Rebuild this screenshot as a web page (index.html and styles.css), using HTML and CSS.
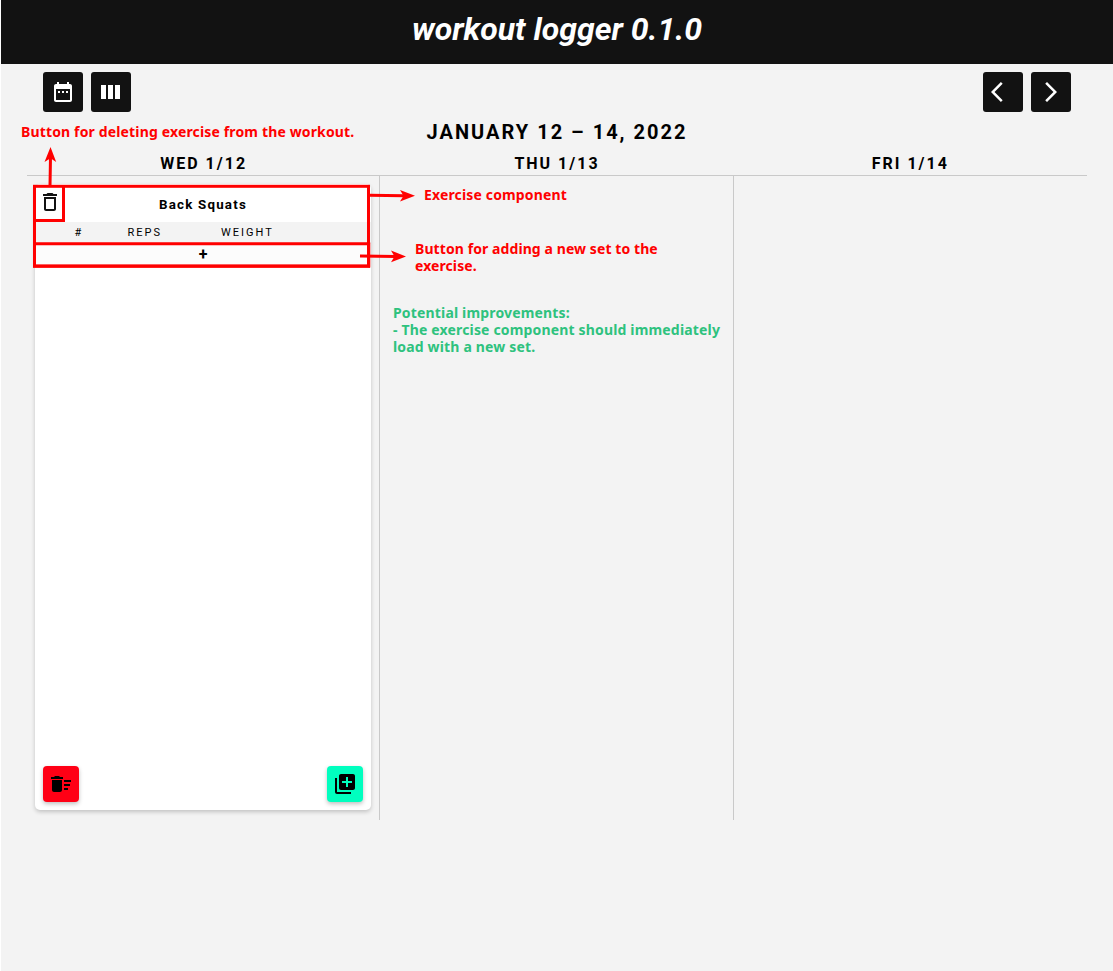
FILE: index.html
```html
<!DOCTYPE html>
<html lang="en">
<head>
<meta charset="utf-8">
<title>workout logger</title>
<link rel="stylesheet" href="styles.css">
</head>
<body>
<div class="app">
  <header class="header"><h1 class="title">workout logger 0.1.0</h1></header>
  <nav class="toolbar">
    <div class="group">
      <button class="btn"><svg class="icon" viewBox="0 0 24 24"><path d="M9 11H7v2h2v-2zm4 0h-2v2h2v-2zm4 0h-2v2h2v-2zm2-7h-1V2h-2v2H8V2H6v2H5c-1.11 0-1.99.9-1.99 2L3 20c0 1.1.89 2 2 2h14c1.1 0 2-.9 2-2V6c0-1.1-.9-2-2-2zm0 16H5V9h14v11z"/></svg></button>
      <button class="btn"><svg class="icon" viewBox="0 0 24 24"><path d="M2 5h5v14H2zM9 5h5v14H9zM16 5h5v14h-5z"/></svg></button>
    </div>
    <div class="group">
      <button class="btn"><svg class="icon" viewBox="0 0 24 24"><path d="M11.67 3.87L9.9 2.1 0 12l9.9 9.9 1.77-1.77L3.54 12z"/></svg></button>
      <button class="btn"><svg class="icon" viewBox="0 0 24 24"><path d="M6.23 20.23L8 22l10-10L8 2l-1.77 1.77L14.46 12z"/></svg></button>
    </div>
  </nav>
  <h2 class="range">JANUARY 12 – 14, 2022</h2>
  <main class="calendar">
    <div class="days">
      <h3 class="day">WED 1/12</h3>
      <h3 class="day">THU 1/13</h3>
      <h3 class="day">FRI 1/14</h3>
    </div>
    <div class="columns">
      <section class="column">
        <article class="workout">
          <div class="exercise">
            <div class="exercise-head">
              <svg class="icon trash" viewBox="0 0 24 24"><path d="M6 19c0 1.1.9 2 2 2h8c1.1 0 2-.9 2-2V7H6v12zM8 9h8v10H8V9zm7.5-5l-1-1h-5l-1 1H5v2h14V4h-3.500z"/></svg>
              <span class="exercise-name">Back Squats</span>
            </div>
            <div class="sets-head"><span class="c1">#</span><span class="c2">REPS</span><span class="c3">WEIGHT</span></div>
            <div class="add-set">+</div>
          </div>
          <div class="actions">
            <button class="action clear"><svg class="icon" viewBox="0 0 24 24"><path d="M15 16h4v2h-4zm0-8h7v2h-7zm0 4h6v2h-6zM3 18c0 1.100.9 2 2 2h6c1.100 0 2-.9 2-2V8H3v10zM14 5h-3l-1-1H6L5 5H2v2h12z"/></svg></button>
            <button class="action add"><svg class="icon" viewBox="0 0 24 24"><path d="M4 6H2v14c0 1.100.9 2 2 2h14v-2H4V6zm16-4H8c-1.100 0-2 .9-2 2v12c0 1.100.9 2 2 2h12c1.100 0 2-.9 2-2V4c0-1.100-.9-2-2-2zm-1 9h-4v4h-2v-4H9V9h4V5h2v4h4v2z"/></svg></button>
          </div>
        </article>
      </section>
      <section class="column"></section>
      <section class="column"></section>
    </div>
  </main>
</div>
<svg class="marks" viewBox="0 0 1113 971">
  <g fill="none" stroke="#f00" stroke-width="3">
    <rect x="34.500" y="186.300" width="334" height="79.700"/>
    <path d="M34.500 243.800H368.500V266.200H34.500z"/>
    <path d="M63.500 187V220.500H34.500"/>
    <path d="M50 186L50.500 157M369 195.300L404 195.700M360 256L396 256.500"/>
  </g>
  <g fill="#f00">
    <path d="M50.500 147L56.200 162L50.500 158.300L44.500 162z"/>
    <path d="M415 195.800L400 201.500L403.500 195.700L400 190z"/>
    <path d="M406 256.500L391 262.200L394.500 256.500L391 250.500z"/>
    <path d="M368.500 242.500H370.300V267.500H368.500z"/>
  </g>
</svg>
<p class="note n1">Button for deleting exercise from the workout.</p>
<p class="note n2">Exercise component</p>
<p class="note n3">Button for adding a new set to the<br>exercise.</p>
<p class="note n4">Potential improvements:<br>- The exercise component should immediately<br>load with a new set.</p>
</body>
</html>
```
FILE: styles.css
```css
* { box-sizing: border-box; }
body { margin: 0; background: #fff; font-family: Roboto, sans-serif; color: #000; overflow: hidden; }
h1, h2, h3, p { margin: 0; }
button { border: 0; padding: 0; display: flex; align-items: center; justify-content: center; }
.app { margin-left: 1px; height: 971px; background: #f3f3f3; }
.header { height: 64px; background: #121212; display: flex; justify-content: center; }
.title { color: #fff; font-size: 32px; line-height: 59px; font-style: italic; font-weight: 700; white-space: nowrap; }
.toolbar { display: flex; justify-content: space-between; padding: 8px 42px 0; }
.group { display: flex; gap: 8px; }
.btn { width: 40px; height: 40px; border-radius: 3px; background: #121212; }
.icon { width: 24px; height: 24px; fill: currentColor; display: block; }
.btn .icon { color: #fff; }
.range { height: 40px; line-height: 40px; text-align: center; font-size: 20px; letter-spacing: 2px; font-weight: 700; }
.calendar { margin: 0 26px; }
.days { display: grid; grid-template-columns: repeat(3, 1fr); height: 24px; border-bottom: 1px solid #c9c9c9; }
.day { text-align: center; font-size: 16px; letter-spacing: 2px; line-height: 23px; }
.columns { display: grid; grid-template-columns: repeat(3, 1fr); height: 644px; }
.column { padding: 8px; border-right: 1px solid #c9c9c9; display: flex; }
.column:last-child { border-right: 0; }
.workout { width: 336px; height: 626px; background: #fff; border-radius: 5px; box-shadow: 0 2px 4px rgba(0,0,0,.2); display: flex; flex-direction: column; justify-content: space-between; }
.exercise-head { height: 38px; display: grid; grid-template-columns: 30px 1fr 30px; padding-top: 6px; }
.trash { margin-left: 3px; color: #121212; }
.exercise-name { text-align: center; font-size: 13.33px; line-height: 29px; font-weight: 700; letter-spacing: 1.2px; }
.sets-head { height: 22px; display: grid; grid-template-columns: 92.5px 93.5px 1fr; background: #f3f3f3; font-size: 11px; line-height: 21px; letter-spacing: 2px; }
.c1 { padding-left: 39.500px; }
.add-set { height: 22px; line-height: 22px; text-align: center; font-size: 16px; font-weight: 700; background: #fcfcfc; }
.actions { display: flex; justify-content: space-between; padding: 0 8px 8px; }
.action { width: 36px; height: 36px; border-radius: 4px; box-shadow: 0 2px 4px rgba(0,0,0,.25); color: #000; }
.clear { background: #ff0015; }
.add { background: #00ffbf; }
.marks { position: absolute; left: 0; top: 0; width: 1113px; height: 971px; pointer-events: none; }
.note { position: absolute; font: 700 14px/17px "Noto Sans", sans-serif; letter-spacing: .15px; color: #f00; white-space: nowrap; }
.n1 { left: 21px; top: 123px; }
.n2 { left: 424px; top: 186px; }
.n3 { left: 415px; top: 240px; letter-spacing: .085px; }
.n4 { left: 393px; top: 304px; letter-spacing: .165px; color: #2ec27e; }
```
